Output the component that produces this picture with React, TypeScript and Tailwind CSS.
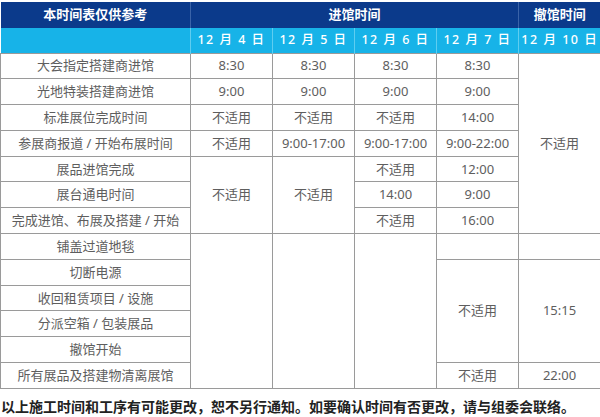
import React from 'react';

const NA = '不适用';

const cell =
  'border border-[#9a9a9a] text-center align-middle text-[13px] text-[#5e5e5e] leading-none p-0';

export default function App() {
  return (
    <div className="w-[600px] h-[417px] bg-white pt-[2px] font-['Noto_Sans','Noto_Sans_CJK_SC',sans-serif]">
      <table className="w-[600px] table-fixed border-collapse">
        <colgroup>
          <col className="w-[190px]" />
          <col className="w-[82px]" />
          <col className="w-[82px]" />
          <col className="w-[82px]" />
          <col className="w-[82px]" />
          <col className="w-[82px]" />
        </colgroup>
        <thead>
          <tr className="h-[26px] bg-[#0b3a8b] text-white text-[13px] font-bold">
            <th className="border-r border-[#3a63a8]">本时间表仅供参考</th>
            <th colSpan={4} className="border-r border-[#3a63a8]">
              进馆时间
            </th>
            <th>撤馆时间</th>
          </tr>
          <tr className="h-[25px] bg-[#17b3e8] text-white text-[12.5px] tracking-[1.5px]">
            <th className="border-r border-[#5fcdf0] font-medium"></th>
            <th className="border-r border-[#5fcdf0] font-medium">12 月 4 日</th>
            <th className="border-r border-[#5fcdf0] font-medium">12 月 5 日</th>
            <th className="border-r border-[#5fcdf0] font-medium">12 月 6 日</th>
            <th className="border-r border-[#5fcdf0] font-medium">12 月 7 日</th>
            <th className="font-medium">12 月 10 日</th>
          </tr>
        </thead>
        <tbody>
          <tr className="h-[25.8px]">
            <td className={cell}>大会指定搭建商进馆</td>
            <td className={cell}>8:30</td>
            <td className={cell}>8:30</td>
            <td className={cell}>8:30</td>
            <td className={cell}>8:30</td>
            <td className={cell} rowSpan={7}>
              {NA}
            </td>
          </tr>
          <tr className="h-[25.8px]">
            <td className={cell}>光地特装搭建商进馆</td>
            <td className={cell}>9:00</td>
            <td className={cell}>9:00</td>
            <td className={cell}>9:00</td>
            <td className={cell}>9:00</td>
          </tr>
          <tr className="h-[25.8px]">
            <td className={cell}>标准展位完成时间</td>
            <td className={cell}>{NA}</td>
            <td className={cell}>{NA}</td>
            <td className={cell}>{NA}</td>
            <td className={cell}>14:00</td>
          </tr>
          <tr className="h-[25.8px]">
            <td className={cell}>参展商报道 / 开始布展时间</td>
            <td className={cell}>{NA}</td>
            <td className={cell}>9:00-17:00</td>
            <td className={cell}>9:00-17:00</td>
            <td className={cell}>9:00-22:00</td>
          </tr>
          <tr className="h-[25.8px]">
            <td className={cell}>展品进馆完成</td>
            <td className={cell} rowSpan={3}>
              {NA}
            </td>
            <td className={cell} rowSpan={3}>
              {NA}
            </td>
            <td className={cell}>{NA}</td>
            <td className={cell}>12:00</td>
          </tr>
          <tr className="h-[25.8px]">
            <td className={cell}>展台通电时间</td>
            <td className={cell}>14:00</td>
            <td className={cell}>9:00</td>
          </tr>
          <tr className="h-[25.8px]">
            <td className={cell}>完成进馆、布展及搭建 / 开始</td>
            <td className={cell}>{NA}</td>
            <td className={cell}>16:00</td>
          </tr>
          <tr className="h-[25.8px]">
            <td className={cell}>铺盖过道地毯</td>
            <td className={cell} rowSpan={6}></td>
            <td className={cell} rowSpan={6}></td>
            <td className={cell} rowSpan={6}></td>
            <td className={cell}></td>
            <td className={cell}></td>
          </tr>
          <tr className="h-[25.8px]">
            <td className={cell}>切断电源</td>
            <td className={cell} rowSpan={4}>
              {NA}
            </td>
            <td className={cell} rowSpan={4}>
              15:15
            </td>
          </tr>
          <tr className="h-[25.8px]">
            <td className={cell}>收回租赁项目 / 设施</td>
          </tr>
          <tr className="h-[25.8px]">
            <td className={cell}>分派空箱 / 包装展品</td>
          </tr>
          <tr className="h-[25.8px]">
            <td className={cell}>撤馆开始</td>
          </tr>
          <tr className="h-[25.8px]">
            <td className={cell}>所有展品及搭建物清离展馆</td>
            <td className={cell}>{NA}</td>
            <td className={cell}>22:00</td>
          </tr>
        </tbody>
      </table>
      <p className="mt-[11px] pl-[1px] text-[14px] font-bold text-[#222] leading-none whitespace-nowrap">
        以上施工时间和工序有可能更改，恕不另行通知。如要确认时间有否更改，请与组委会联络。
      </p>
    </div>
  );
}
